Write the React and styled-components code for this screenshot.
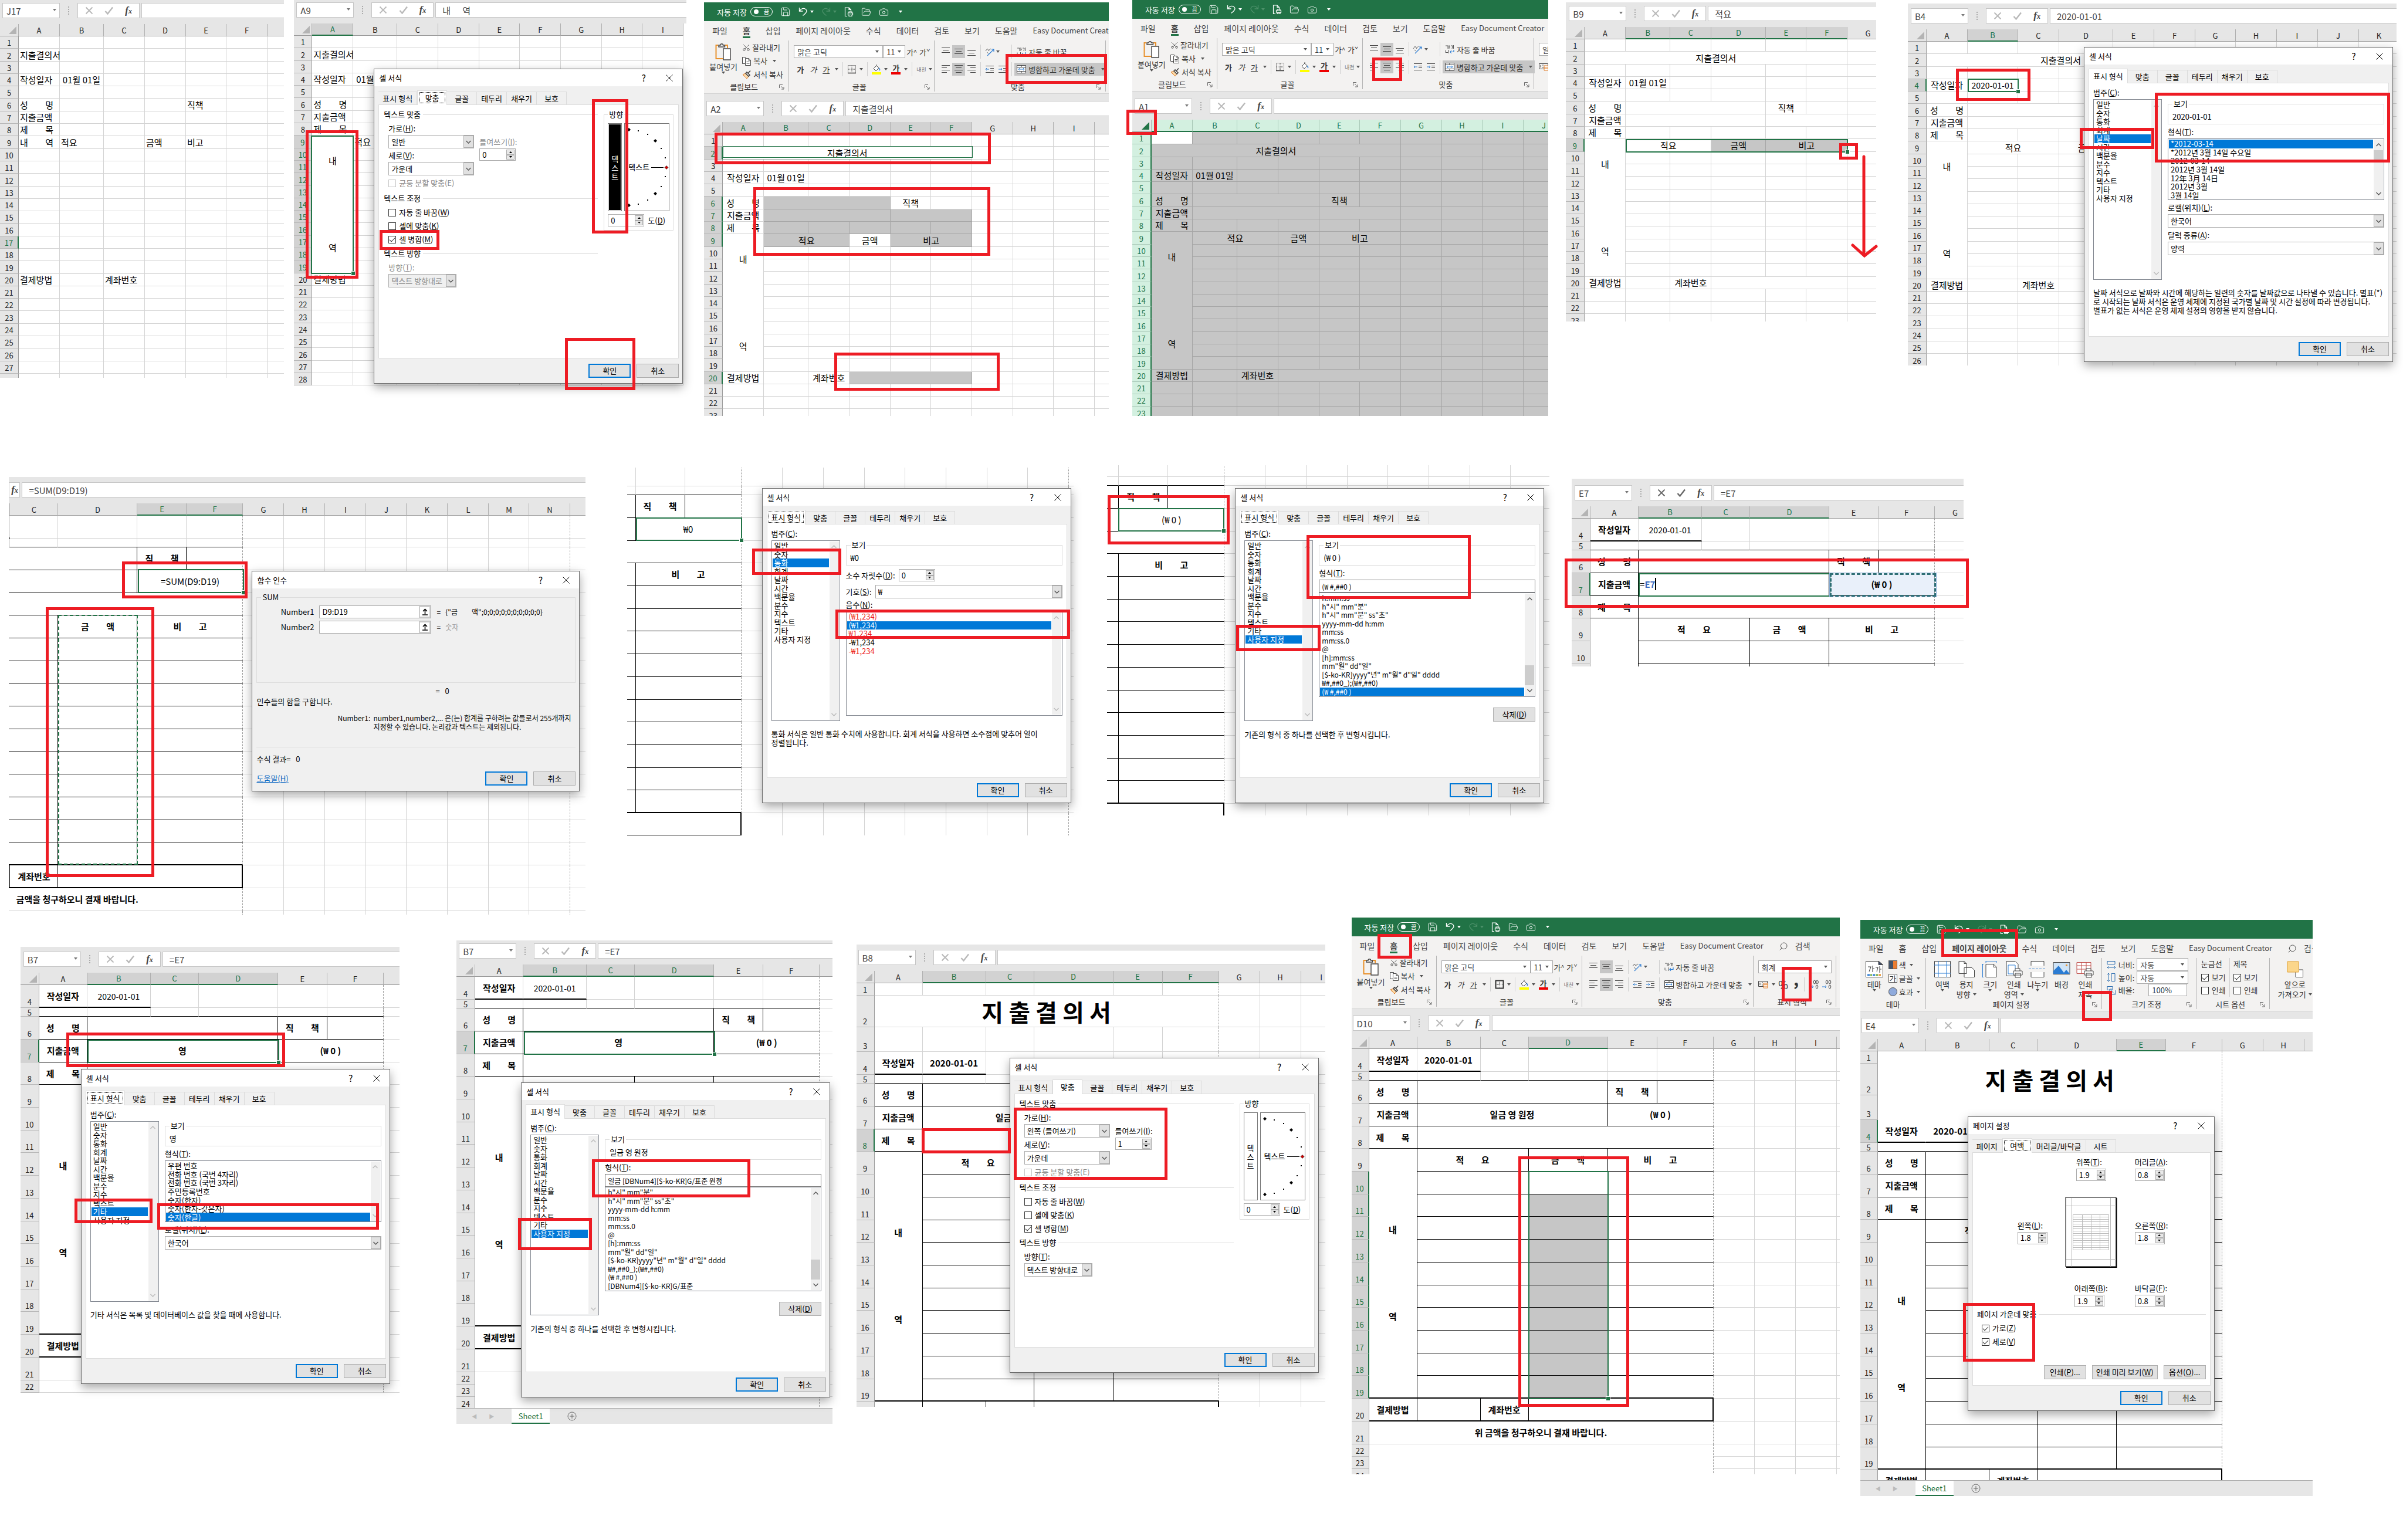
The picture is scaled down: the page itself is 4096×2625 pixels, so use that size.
import { Fragment } from "react";
import styled, { createGlobalStyle, css } from "styled-components";
import { Camera, FolderOpen, Save, Scissors, Search } from "lucide-react";

// captures are shown slightly reduced, sizes below are in capture pixels
const BOARD = 4232;
const SCALE = 4096 / BOARD;
const px = (n) => Math.round(n * SCALE);

// whole-pixel track sizes that do not drift over a long run
const tracks = (sizes) => {
  let sum = 0;
  return sizes.map((s) => {
    const from = px(sum);
    sum += s;
    return px(sum) - from;
  });
};

const GREEN = "#217346";
const RED = "#ed1c24";
const BLUE = "#0078d7";

/* ---------- ICONS ---------- */

const Svg = ({ w = 16, h = 16, children, ...rest }) => (
  <svg width={w} height={h} viewBox={`0 0 ${w} ${h}`} fill="none" stroke="#444" {...rest}>
    {children}
  </svg>
);

const UndoIcon = () => (
  <Svg stroke="#fff" strokeWidth="1.3">
    <path d="M1.5 1v6h6M1.5 7C5 2.5 9 1.5 12 3.5c3.5 2.5 2.5 6-4.5 11" />
  </Svg>
);
const RedoIcon = () => (
  <Svg stroke="#4c9069" strokeWidth="1.3">
    <path d="M14.5 1v6h-6M14.5 7C11 2.5 7 1.5 4 3.5c-3.5 2.5-2.5 6 4.5 11" />
  </Svg>
);
const PrintDocIcon = () => (
  <Svg h={17} stroke="#fff" strokeWidth="1.2">
    <path d="M5 15.5H1.5V1H8l3.5 3.5V8M8 1v3.5h3.5M6.5 13v-3h8v3.5h-8M8 10V8h5v2M8 13.5v2h5v-2" />
  </Svg>
);
const PasteIcon = () => (
  <Svg w={28} h={30} strokeWidth="1.4">
    <path d="M5 4H1.5v23H14M17 4h4v5" stroke="#e8912d" strokeWidth="2" />
    <path d="M6 7V4h3c0-3 4.5-3 4.5 0h3v3z" fill="#f3f2f1" />
    <path d="M14 10h12v19H14z" fill="#fff" />
  </Svg>
);
const CopyIcon = () => (
  <Svg>
    <path d="M5 12.5H.5v-11h6V4M5.5 3.5H11l3.5 3.5v8.5h-9zM11 3.5V7h3.5M7.5 9.5h5M7.5 12h5" fill="#fff" />
  </Svg>
);
const PainterIcon = () => (
  <Svg>
    <path d="M1 8l5-2 5 5-3 4z" fill="#fbd9a8" stroke="#e07b24" />
    <path d="M6 6l2-2 5 5-2 2zM10 6l4-4.5" strokeWidth="1.6" fill="#fff" />
  </Svg>
);
const BorderIcon = ({ solid }) => (
  <Svg stroke="#333" strokeDasharray={solid ? undefined : "1 1"}>
    <path d="M1.5 1.5h13v13h-13z" strokeWidth={solid ? 2 : 1} />
    <path d="M8 2v12M2 8h12" strokeDasharray="1 1" />
    {!solid && <path d="M1 14.5h14" strokeDasharray="none" strokeWidth="1.5" />}
  </Svg>
);
const FillIcon = () => (
  <Svg h={18}>
    <path d="M3 8l5-5 4 4-5 5zM8 3V1" fill="#fff" />
    <path d="M12 7c2 2 2 3 1 4" stroke="#2b7cd3" strokeWidth="1.5" />
    <path d="M0 16h16" stroke="#ff0" strokeWidth="4" />
  </Svg>
);
const LinesIcon = ({ rows }) => (
  <Svg>
    {rows.map(([x1, x2, y]) => (
      <path key={y} d={`M${x1} ${y}.5H${x2}`} />
    ))}
  </Svg>
);
const IndentIcon = ({ out }) => (
  <Svg h={14}>
    <path d="M1 1.5h14M9 5.5h6M9 8.5h6M1 12.5h14" />
    <path d={out ? "M7 7H1M3 5L1 7l2 2" : "M1 7h6M5 5l2 2-2 2"} stroke="#2b7cd3" />
  </Svg>
);
const AngleIcon = () => (
  <Svg w={17}>
    <path d="M1 7l3-4 3 4M6 6l4-3M3 9l3 2" strokeWidth=".8" />
    <path d="M4 15L15 4M11 4h4v4" stroke="#2b7cd3" strokeWidth="1.2" />
  </Svg>
);
const WrapIcon = () => (
  <Svg>
    <path d="M1 2h4v5M7 1v6M7 4h2M10 2h3l-1 5M14.5 1v6M1 9.5v4h4M6.5 9v6" strokeWidth=".9" />
    <path d="M15 9v3.5H9M11 10l-2 2.5 2 2.5" stroke="#2b7cd3" strokeWidth="1.2" />
  </Svg>
);
const MergeIcon = () => (
  <Svg>
    <path d="M.5 1.5h15v13H.5zM.5 4.5h15M.5 11.5h15M8 1.5v3M8 11.5v3" fill="#fff" />
    <path d="M3 8h10M5 6L3 8l2 2M11 6l2 2-2 2" stroke="#2b7cd3" />
  </Svg>
);
const MoneyIcon = () => (
  <Svg w={18} h={14}>
    <path d="M.5 1.5h15v9H.5zM3 4v4M6 4h2M6 8h2" />
    <path d="M9 5h7v8H9zM9 7.5h7M9 10h7" fill="#fff" stroke="#e07b24" />
  </Svg>
);
const DecimalIcon = ({ less }) => (
  <Svg w={17}>
    <ellipse cx={less ? 10 : 14} cy="4" rx="1.8" ry="3" />
    <ellipse cx={less ? 14.5 : 9} cy="4" rx="1.8" ry="3" />
    <ellipse cx="14" cy="12" rx="1.8" ry="3" />
    <path d="M1 12h7M6 10l2 2-2 2" stroke="#2b7cd3" />
  </Svg>
);
const LauncherIcon = () => (
  <Svg w={9} h={9} stroke="#666">
    <path d="M.5 6V.5H6M3 3l4.5 4.5M8 4v4H4" />
  </Svg>
);
const XIcon = ({ color = "#b8b8b8", width = 1.6 }) => (
  <Svg w={14} h={14} stroke={color} strokeWidth={width}>
    <path d="M1.5 1.5l11 11M12.5 1.5l-11 11" />
  </Svg>
);
const TickIcon = ({ color }) => (
  <Svg h={14} stroke={color} strokeWidth="2.4">
    <path d="M1.5 8l4 4.5L14 1.5" />
  </Svg>
);
const Chevron = ({ up, color = "#555" }) => (
  <Svg w={9} h={6} stroke={color} strokeWidth="1.4">
    <path d={up ? "M.5 5l4-4 4 4" : "M.5 1l4 4 4-4"} />
  </Svg>
);
const UpArrow = () => (
  <Svg w={11} h={12} stroke="#000" strokeWidth="1.6">
    <path d="M5.5 10V2M2 5l3.5-3.5L9 5M1 11h9" />
  </Svg>
);
const PageSizeIcon = ({ d }) => (
  <Svg>
    <path d={d} stroke="#2b6cb0" />
  </Svg>
);
const PageIcon = ({ kind }) => (
  <Svg w={30} h={30}>
    {kind === "margins" && (
      <>
        <path d="M1.5 1.5h27v27h-27z" fill="#fff" />
        <path d="M8 1v28M22 1v28M1 8h28M1 22h28" stroke="#2b7cd3" />
      </>
    )}
    {kind === "orient" && <path d="M2 1.5h9l4 4v17H2zM11 1.5v4h4M11 12.5h13l4.5 4v12H11z" fill="#fff" />}
    {kind === "size" && (
      <>
        <path d="M8 6.5h13l5 5v17H8zM21 6.5v5h5" fill="#fff" />
        <path d="M2.5 6v23M1 6.5h3M1 28.5h3M8 2.5h18M8 1v3M26 1v3" stroke="#2b7cd3" />
      </>
    )}
    {kind === "area" && (
      <>
        <path d="M2 1.5h15l5 5v20H2z" fill="#fff" />
        <path d="M5 8h12v15H5z" stroke="#2b7cd3" />
        <path d="M14 18h15v7H14zM17 18v-4h8v4M17 22h9v7h-9z" fill="#fff" />
      </>
    )}
    {kind === "breaks" && (
      <>
        <path d="M4 9V1.5h22V9M4 20v8.5h22V20" fill="#fff" />
        <path d="M0 14.5h30" stroke="#2b7cd3" strokeDasharray="4 2" />
      </>
    )}
    {kind === "back" && (
      <>
        <path d="M1 3.5h28v20H1z" fill="#cfe4f7" />
        <path d="M1 18l9-9 9 12 4-5 6 7H1z" fill="#2b7cd3" stroke="none" />
        <path d="M22 7h3v3h-3z" fill="#e8912d" stroke="none" />
      </>
    )}
    {kind === "titles" && (
      <>
        <path d="M1 3.5h24v19H1zM1 9h24M1 15h24M9 4v18M17 4v18" stroke="#c0504d" fill="#fff" />
        <path d="M14 18h15v7H14zM17 18v-4h8v4M17 22h9v7h-9z" fill="#fff" />
      </>
    )}
    {kind === "theme" && (
      <>
        <path d="M.5 1.5h22l7 6v21H.5z" fill="#fff" />
        <path d="M22 1.5v6h7z" fill="#3b4a6b" />
        <path d="M3 25h4M12 25h4" stroke="#2b7cd3" strokeWidth="3" />
        <path d="M8 25h3M17 25h4" stroke="#70ad47" strokeWidth="3" />
        <path d="M22 25h4" stroke="#e8912d" strokeWidth="3" />
        <path d="M4 11h5l-3 8M12 9v11M12 14h3M17 12h4l-2 7M24 10v11M24 15h3" strokeWidth="1.1" />
      </>
    )}
    {kind === "front" && (
      <>
        <path d="M16 20v8.5h12.5V16H22" fill="#fff" />
        <path d="M2 2h19v18H2z" fill="#fbd68b" stroke="#e0a030" />
      </>
    )}
  </Svg>
);

/* ---------- PAGE ---------- */

const GlobalStyle = createGlobalStyle`
  * { box-sizing: border-box; }
  body {
    margin: 0;
    background: #fff;
    font-family: "Noto Sans CJK KR", sans-serif;
    font-size: 13px;
    color: #000;
  }
  button, input, select { font: inherit; color: inherit; margin: 0; padding: 0; border-radius: 0; }
  svg { display: block; flex: none; }
`;

const Page = styled.main`
  min-height: 100vh;
  overflow: hidden;
`;

const StripGrid = styled.section`
  display: grid;
  grid-template-columns: ${(p) => p.$cols};
  align-items: start;
`;

const ShotFrame = styled.figure`
  position: relative;
  grid-column: ${(p) => p.$col};
  margin: ${(p) => p.$drop}px 0 0;
`;

const Screen = styled.div`
  display: flex;
  flex-direction: column;
  height: ${(p) => p.$h}px;
  overflow: hidden;
`;

const Float = styled.div`
  position: absolute;
  left: ${(p) => p.$x}px;
  top: ${(p) => p.$y}px;
`;

const Box = styled.div`
  position: absolute;
  left: ${(p) => p.$x}px;
  top: ${(p) => p.$y}px;
  width: ${(p) => p.$w}px;
  height: ${(p) => p.$h}px;
  pointer-events: none;
`;

const Mark = styled(Box)`
  border: 5px solid ${RED};
`;

const Selection = styled(Box)`
  border: ${(p) => (p.$kind === "thin" ? 1 : 2)}px ${(p) => (p.$kind === "ants" ? "dashed" : "solid")} ${GREEN};
  ${(p) =>
    p.$kind === "plain" &&
    css`
      &::after {
        content: "";
        position: absolute;
        right: -4px;
        bottom: -4px;
        width: 6px;
        height: 6px;
        background: ${GREEN};
        outline: 1px solid #fff;
      }
    `}
  ${(p) =>
    p.$kind === "ref" &&
    css`
      border: 3px dashed #2f6f75;
      outline: 1px solid #8ab0d8;
    `}
`;

const Arrow = styled.svg`
  position: absolute;
  left: ${(p) => p.$x}px;
  top: ${(p) => p.$y}px;
`;

/* ---------- RIBBON ---------- */

const TitleBar = styled.div`
  display: flex;
  align-items: center;
  flex: none;
  gap: 13px;
  height: 32px;
  padding-left: 22px;
  background: ${GREEN};
  color: #fff;
  white-space: nowrap;
`;

const AutoSave = styled.label`
  display: flex;
  align-items: center;
  gap: 6px;
`;

const Toggle = styled.button`
  display: flex;
  align-items: center;
  justify-content: space-between;
  width: 38px;
  height: 16px;
  padding: 0 5px;
  border: 1px solid #fff;
  border-radius: 8px;
  background: none;
  font-size: 10px;
  line-height: 12px;
  &::before {
    content: "";
    width: 8px;
    height: 8px;
    border-radius: 50%;
    background: #fff;
  }
`;

const Pair = styled.span`
  display: flex;
  align-items: center;
  gap: 4px;
`;

const Caret = styled.i`
  flex: none;
  width: 0;
  height: 0;
  border: 3px solid transparent;
  border-top: 4px solid ${(p) => p.$color || "#555"};
  border-bottom: 0;
  margin-left: ${(p) => p.$gap || 0}px;
`;

const Tabs = styled.nav`
  display: flex;
  flex: none;
  gap: 26px;
  height: 29px;
  padding: 6px 0 0 14px;
  background: #f3f2f1;
  font-size: 14px;
  line-height: 20px;
  white-space: nowrap;
  color: #444;
`;

const RibbonTab = styled.a`
  height: 23px;
  color: inherit;
  text-decoration: none;
  border-bottom: 3px solid ${(p) => (p.$on ? GREEN : "transparent")};
  font-size: ${(p) => (p.$latin ? 13 : 14)}px;
  font-weight: ${(p) => (p.$on ? 700 : 400)};
`;

const SearchTab = styled.span`
  display: flex;
  gap: 12px;
`;

const SearchGlass = styled(Search)`
  margin-top: 3px;
  transform: scaleX(-1);
`;

const CutIcon = styled(Scissors)`
  transform: rotate(-90deg);
`;

const RibbonBody = styled.div`
  display: flex;
  flex: none;
  height: 95px;
  padding: 4px 0 3px;
  background: #f3f2f1;
  border-bottom: 1px solid #d2d2d2;
  color: #333;
  white-space: nowrap;
`;

const GroupBox = styled.div`
  display: flex;
  flex-direction: column;
  justify-content: space-between;
  flex: none;
  width: ${(p) => p.$w}px;
  padding: 0 7px 0 8px;
  border-right: 1px solid #b5b5b5;
`;

const GroupFoot = styled.div`
  display: flex;
  align-items: center;
  line-height: 16px;
  span {
    flex: 1;
    text-align: center;
  }
`;

const Row = styled.div`
  display: flex;
  align-items: ${(p) => p.$align || "center"};
  gap: ${(p) => p.$gap || 0}px;
`;

const Stack = styled.div`
  display: flex;
  flex-direction: column;
  gap: ${(p) => p.$gap || 0}px;
`;

const ToolRows = styled.div`
  display: flex;
  flex-direction: column;
  gap: 8px;
  padding-top: 8px;
`;

const ToolRow = styled.div`
  display: flex;
  align-items: center;
  height: 22px;
`;

const SmallTool = styled.button`
  display: flex;
  align-items: center;
  gap: 3px;
  height: 23px;
  border: 0;
  background: none;
`;

const BigTool = styled.button`
  display: flex;
  flex-direction: column;
  align-items: center;
  width: ${(p) => p.$w || 41}px;
  padding: 4px 0 0;
  border: 0;
  background: none;
  line-height: 17px;
  svg { margin-bottom: 2px; }
`;

const Tool = styled.button`
  display: flex;
  align-items: center;
  justify-content: center;
  flex: none;
  width: ${(p) => p.$w || 22}px;
  height: 22px;
  border: 0;
  background: ${(p) => (p.$on ? "#c6c6c6" : "none")};
  font-weight: ${(p) => (p.$bold ? 700 : 400)};
  font-style: ${(p) => (p.$italic ? "italic" : "normal")};
  text-decoration: ${(p) => (p.$under ? "underline" : "none")};
`;

const PercentTool = styled(Tool)`
  width: 28px;
  font-size: 18px;
`;

const CommaTool = styled(Tool)`
  width: 16px;
  padding-bottom: 20px;
  font-size: 28px;
  font-weight: 700;
  line-height: 6px;
`;

const MergeTool = styled.button`
  display: flex;
  align-items: center;
  gap: 4px;
  height: 22px;
  padding: 0 4px;
  border: 0;
  background: ${(p) => (p.$on ? "#c6c6c6" : "none")};
`;

const Sep = styled.i`
  flex: none;
  width: 1px;
  height: ${(p) => p.$h || 24}px;
  margin: 0 ${(p) => p.$m || 7}px 0 ${(p) => p.$l || p.$m || 7}px;
  background: #cfcfcf;
`;

const ColorBar = styled.span`
  width: 16px;
  border-bottom: 4px solid #e00;
  font-weight: 700;
  line-height: 14px;
`;

const Mini = styled.span`
  font-size: 9px;
  color: #777;
`;

const ComboBox = styled.span`
  position: relative;
  display: flex;
  flex: none;
  width: ${(p) => p.$w}px;
  select {
    width: 100%;
    height: 22px;
    padding: 0 5px;
    border: 1px solid #ababab;
    background: #fff;
    appearance: none;
    color: #444;
  }
  i {
    position: absolute;
    right: 7px;
    top: 9px;
  }
`;

const Combo = ({ w, value, label }) => (
  <ComboBox $w={w}>
    <select aria-label={label} defaultValue={value}>
      <option>{value}</option>
    </select>
    <Caret />
  </ComboBox>
);

const Group = ({ w, title, launcher = true, children }) => (
  <GroupBox $w={w}>
    {children}
    <GroupFoot>
      <span>{title}</span>
      {launcher && <LauncherIcon />}
    </GroupFoot>
  </GroupBox>
);

const TAB_NAMES = ["파일", "홈", "삽입", "페이지 레이아웃", "수식", "데이터", "검토", "보기", "도움말", "Easy Document Creator"];

const Ribbon = ({ active, search, children }) => (
  <>
    <TitleBar>
      <AutoSave>
        자동 저장
        <Toggle type="button">끔</Toggle>
      </AutoSave>
      <Save size={18} strokeWidth={1.3} />
      <Pair><UndoIcon /><Caret $color="#fff" /></Pair>
      <Pair><RedoIcon /><Caret $color="#4c9069" /></Pair>
      <PrintDocIcon />
      <FolderOpen size={17} strokeWidth={1.3} />
      <Camera size={17} strokeWidth={1.3} />
      <Caret $color="#fff" $gap={4} />
    </TitleBar>
    <Tabs>
      {TAB_NAMES.map((t) => (
        <RibbonTab key={t} href="#" $on={t === active} $latin={t[0] === "E"}>{t}</RibbonTab>
      ))}
      {search && (
        <SearchTab>
          <SearchGlass size={16} strokeWidth={1.4} />
          검색
        </SearchTab>
      )}
    </Tabs>
    <RibbonBody>{children}</RibbonBody>
  </>
);

const AL = {
  top: [[1, 15, 1], [3, 13, 5], [1, 15, 9]],
  mid: [[1, 15, 3], [3, 13, 7], [1, 15, 11]],
  bot: [[1, 15, 6], [3, 13, 10], [1, 15, 14]],
  left: [[1, 15, 1], [1, 10, 5], [1, 15, 9], [1, 10, 13]],
  center: [[1, 15, 1], [3, 13, 5], [1, 15, 9], [3, 13, 13]],
  right: [[1, 15, 1], [6, 15, 5], [1, 15, 9], [6, 15, 13]],
};

const HomeRibbon = ({ merged, solidBorder, number, wide, search }) => (
  <Ribbon active="홈" search={search}>
    <Group w={145} title="클립보드">
      <Row $gap={7} $align="flex-start">
        <BigTool $w={50}>
          <PasteIcon />
          붙여넣기
          <Caret />
        </BigTool>
        <Stack>
          <SmallTool><CutIcon size={14} strokeWidth={1.4} />잘라내기</SmallTool>
          <SmallTool><CopyIcon />복사<Caret $gap={6} /></SmallTool>
          <SmallTool><PainterIcon />서식 복사</SmallTool>
        </Stack>
      </Row>
    </Group>
    <Group w={248} title="글꼴">
      <ToolRows>
        <ToolRow>
          <Combo w={152} value="맑은 고딕" label="글꼴" />
          <Combo w={38} value="11" label="글꼴 크기" />
          <Tool>가<sup>^</sup></Tool>
          <Tool>가<sup>ˇ</sup></Tool>
        </ToolRow>
        <ToolRow>
          <Tool $bold>가</Tool>
          <Tool $italic>가</Tool>
          <Tool $under>가</Tool>
          <Caret $gap={4} />
          <Sep />
          <BorderIcon solid={solidBorder} />
          <Caret $gap={5} />
          <Sep />
          <FillIcon />
          <Caret $gap={5} />
          <Tool $w={28}><ColorBar>가</ColorBar></Tool>
          <Caret />
          <Sep />
          <Mini>내천</Mini>
          <Caret $gap={4} />
        </ToolRow>
      </ToolRows>
    </Group>
    <Group w={292} title="맞춤">
      <ToolRows>
        <ToolRow>
          <Tool><LinesIcon rows={AL.top} /></Tool>
          <Tool $on><LinesIcon rows={AL.mid} /></Tool>
          <Tool><LinesIcon rows={AL.bot} /></Tool>
          <Sep $m={4} />
          <Tool><AngleIcon /></Tool>
          <Caret />
          <Sep $l={20} $m={4} />
          <MergeTool><WrapIcon />자동 줄 바꿈</MergeTool>
        </ToolRow>
        <ToolRow>
          <Tool><LinesIcon rows={AL.left} /></Tool>
          <Tool $on><LinesIcon rows={AL.center} /></Tool>
          <Tool><LinesIcon rows={AL.right} /></Tool>
          <Sep $m={4} />
          <Tool><IndentIcon out /></Tool>
          <Tool><IndentIcon /></Tool>
          <Sep $m={4} />
          <MergeTool $on={merged}><MergeIcon />병합하고 가운데 맞춤<Caret $gap={6} /></MergeTool>
        </ToolRow>
      </ToolRows>
    </Group>
    {number && (
      <Group w={141} title={wide ? "표시 형식" : ""} launcher={wide}>
        <ToolRows>
          <ToolRow><Combo w={125} value={number} label="표시 형식" /></ToolRow>
          <ToolRow>
            <MoneyIcon />
            <Caret $gap={5} />
            {wide && (
              <>
                <PercentTool>%</PercentTool>
                <CommaTool>,</CommaTool>
                <Sep $m={5} />
                <Tool><DecimalIcon less /></Tool>
                <Tool><DecimalIcon /></Tool>
              </>
            )}
          </ToolRow>
        </ToolRows>
      </Group>
    )}
  </Ribbon>
);

const Check = styled.input.attrs({ type: "checkbox" })`
  position: relative;
  flex: none;
  width: 13px;
  height: 13px;
  border: 1px solid ${(p) => (p.disabled ? "#c4c4c4" : "#333")};
  background: #fff;
  appearance: none;
  &:checked::after {
    content: "";
    position: absolute;
    left: 3px;
    top: 0;
    width: 4px;
    height: 8px;
    border: solid #333;
    border-width: 0 1px 1px 0;
    transform: rotate(45deg);
  }
`;

const CheckLabel = styled.label`
  display: flex;
  align-items: center;
  gap: 5px;
  line-height: 16px;
  color: ${(p) => (p.$off ? "#8a8a8a" : "inherit")};
`;

const Swatch = styled.i`
  width: 15px;
  height: 15px;
  border: 1px solid #555;
  border-radius: ${(p) => (p.$round ? "50%" : 0)};
  background: ${(p) => p.$bg};
  font-style: normal;
  line-height: 13px;
`;

const ScaleLine = styled.label`
  display: flex;
  align-items: center;
  gap: 4px;
  input {
    width: 66px;
    height: 21px;
    margin-left: 20px;
    padding-left: 5px;
    border: 1px solid #ababab;
    background: #fff;
  }
`;

const PAGE_TOOLS = [
  ["margins", "여백", ""],
  ["orient", "용지", "방향"],
  ["size", "크기", ""],
  ["area", "인쇄", "영역"],
  ["breaks", "나누기", ""],
  ["back", "배경", null],
  ["titles", "인쇄", "제목"],
];

const LayoutRibbon = () => (
  <Ribbon active="페이지 레이아웃" search>
    <Group w={112} title="테마" launcher={false}>
      <Row $gap={8} $align="flex-start">
        <BigTool $w={32}><PageIcon kind="theme" />테마<Caret /></BigTool>
        <Stack>
          <SmallTool><Swatch $bg="linear-gradient(90deg, #44546a 50%, #ed7d31 50%)" />색<Caret $gap={3} /></SmallTool>
          <SmallTool><Swatch $bg="#fff">가</Swatch>글꼴<Caret $gap={3} /></SmallTool>
          <SmallTool><Swatch $round $bg="#8faadc" />효과<Caret $gap={3} /></SmallTool>
        </Stack>
      </Row>
    </Group>
    <Group w={300} title="페이지 설정">
      <Row $align="flex-start">
        {PAGE_TOOLS.map(([kind, a, b]) => (
          <BigTool key={kind} $w={41}>
            <PageIcon kind={kind} />
            {a}
            {b !== null && <Pair>{b}{kind !== "titles" && <Caret />}</Pair>}
          </BigTool>
        ))}
      </Row>
    </Group>
    <Group w={161} title="크기 조정">
      <Stack>
        <Row $gap={4}><PageSizeIcon d="M1 2.5h13v5H1zM1 13h14M3 11l-2 2 2 2M13 11l2 2-2 2" />너비:<Combo w={88} value="자동" label="너비" /></Row>
        <Row $gap={4}><PageSizeIcon d="M8 1.5h6v13H8zM3 1v14M1 3l2-2 2 2M1 13l2 2 2-2" />높이:<Combo w={88} value="자동" label="높이" /></Row>
        <ScaleLine><PageSizeIcon d="M1 1.5h9v6H1zM15 15V8M15 15H8M13 14L5 6M5 10V6h4" />배율:<input defaultValue="100%" /></ScaleLine>
      </Stack>
    </Group>
    <Group w={125} title="시트 옵션">
      <Row $gap={4} $align="flex-start">
        {["눈금선", "제목"].map((t, i) => (
          <Fragment key={t}>
            {i > 0 && <Sep $h={66} $m={2} />}
            <Stack $gap={6}>
              <span>{t}</span>
              <CheckLabel><Check defaultChecked />보기</CheckLabel>
              <CheckLabel><Check />인쇄</CheckLabel>
            </Stack>
          </Fragment>
        ))}
      </Row>
    </Group>
    <Group w={90} title="" launcher={false}>
      <BigTool $w={70}><PageIcon kind="front" />앞으로<Pair>가져오기<Caret /></Pair></BigTool>
    </Group>
  </Ribbon>
);

/* ---------- FORMULA BAR ---------- */

const Bar = styled.div`
  display: flex;
  align-items: stretch;
  flex: none;
  height: ${(p) => p.$top + 36}px;
  padding: ${(p) => p.$top}px 0 10px ${(p) => p.$inset}px;
  background: #e6e6e6;
  color: #444;
  font-size: 15px;
`;

const NameBox = styled.span`
  position: relative;
  flex: none;
  width: 98px;
  input {
    width: 100%;
    height: 100%;
    padding-left: 6px;
    border: 1px solid #c6c6c6;
    background: #fff;
  }
  i {
    position: absolute;
    right: 6px;
    top: 10px;
  }
`;

const Dots = styled.i`
  flex: none;
  width: 2px;
  margin: 6px 14px;
  border-left: 2px dotted #aaa;
`;

const FxBox = styled.span`
  display: flex;
  align-items: center;
  justify-content: ${(p) => (p.$short ? "center" : "space-between")};
  flex: none;
  width: ${(p) => (p.$short ? 19 : 106)}px;
  margin-right: 3px;
  padding: 0 ${(p) => (p.$short ? 0 : 12)}px;
  border: 1px solid #c6c6c6;
  background: #fff;
  overflow: hidden;
  em {
    font-family: "Liberation Serif", serif;
    font-size: 17px;
    font-weight: 700;
  }
  sub { font-size: 12px; vertical-align: baseline; }
`;

const FormulaInput = styled.input`
  flex: 1;
  min-width: 0;
  && { padding-left: 11px; }
  border: 1px solid #c6c6c6;
  border-right: 0;
  background: #fff;
`;

const FormulaBar = ({ cell, value = "", top = 5, inset = 4, live }) => (
  <Bar $top={top} $inset={inset}>
    {cell && (
      <>
        <NameBox>
          <input aria-label="이름 상자" defaultValue={cell} />
          <Caret $color="#777" />
        </NameBox>
        <Dots />
      </>
    )}
    <FxBox $short={!cell}>
      {cell && <XIcon color={live ? "#666" : "#b8b8b8"} width={1.8} />}
      {cell && <TickIcon color={live ? "#666" : "#b8b8b8"} />}
      <em>f<sub>x</sub></em>
    </FxBox>
    <FormulaInput aria-label="수식 입력줄" defaultValue={value} />
  </Bar>
);

/* ---------- SHEET ---------- */

const LINES = {
  g: "1px solid #d4d4d4",
  m: "1px solid #a6a6a6",
  k: "1px solid #000",
  K: "2px solid #000",
  d: "1px dashed #999",
  n: "1px solid transparent",
};

const Table = styled.table`
  flex: none;
  width: ${(p) => p.$w}px;
  margin: ${(p) => p.$dy}px 0 0 ${(p) => p.$dx}px;
  table-layout: fixed;
  border-collapse: separate;
  border-spacing: 0;
  background: #fff;
`;

const Col = styled.col`
  width: ${(p) => p.$w}px;
`;

const Head = styled.th`
  height: ${(p) => p.$h}px;
  padding: 0;
  border: 0 solid #9b9b9b;
  border-right-width: 1px;
  border-bottom-width: 1px;
  border-color: ${(p) => (p.$mint ? "#a9c9b8" : p.$row ? "#9b9b9b #9b9b9b #b8b8b8" : "#b0b0b0 #b0b0b0 #9b9b9b")};
  background: ${(p) => (p.$mint ? "#d3f0e0" : p.$on ? "#d2d2d2" : "#e6e6e6")};
  color: ${(p) => (p.$on || p.$mint ? GREEN : "#222")};
  font-size: 13px;
  font-weight: 400;
  line-height: 13px;
  vertical-align: ${(p) => (p.$row ? "bottom" : "middle")};
  ${(p) => p.$row && p.$h > 18 && "padding-bottom: 3px;"}
  ${(p) => (p.$on || p.$mint) && (p.$row ? `border-right: 2px solid ${GREEN};` : `border-bottom: 2px solid ${GREEN};`)}
`;

const Corner = styled.td`
  padding: 0 3px 3px 0;
  border-right: 1px solid #b0b0b0;
  border-bottom: 1px solid #9b9b9b;
  background: #e6e6e6;
  vertical-align: bottom;
  &::after {
    content: "";
    display: block;
    width: 0;
    margin-left: auto;
    border-left: 13px solid transparent;
    border-bottom: 13px solid ${(p) => (p.$on ? GREEN : "#b4b4b4")};
  }
`;

const Cell = styled.td`
  padding: 0 ${(p) => (p.$align === "left" ? 2 : 0)}px;
  border-right: ${(p) => p.$r};
  border-bottom: ${(p) => p.$b};
  background: ${(p) => p.$fill || "transparent"};
  font-size: ${(p) => p.$size || 15}px;
  font-weight: ${(p) => (p.$bold ? 700 : 400)};
  line-height: ${(p) => (p.$size > 20 ? 44 : 18)}px;
  text-align: ${(p) => p.$align};
  white-space: nowrap;
`;

// two syllables set to the ends of a four-syllable label
const Spread = styled.span`
  display: inline-block;
  width: 57px;
  text-align-last: justify;
`;

const Tall = styled.span`
  display: flex;
  flex-direction: column;
  align-items: center;
  gap: 130px;
`;

const Ref = styled.b`
  color: #3c6cc0;
  border-right: 2px solid #000;
`;

const NAMES = "ABCDEFGHIJKLMNOP";

const Sheet = ({
  cols,
  rows,
  cells = {},
  heads = true,
  rowHead = 33,
  on = {},
  dx = 0,
  dy = 0,
  align = "center",
  line = "g",
  breaks = "",
  mute = [],
  all,
  from = "A",
}) => {
  const colW = tracks(cols);
  const rowH = tracks(rows.map((r) => r[1]));
  const head = heads === true ? px(rowHead) : 0;
  const covered = new Set();
  const base = all ? "m" : line;
  return (
    <Table $w={colW.reduce((a, b) => a + b, head)} $dx={px(dx)} $dy={px(dy)}>
      <colgroup>
        {head > 0 && <Col $w={head} />}
        {colW.map((w, i) => <Col key={i} $w={w} />)}
      </colgroup>
      {heads && (
        <thead>
          <tr>
            {head > 0 && <Corner $on={all} />}
            {cols.map((_, i) => (
              <Head key={i} scope="col" $h={21} $mint={all} $on={on.cols?.includes(NAMES[i])}>
                {NAMES[i] >= from && !mute.includes(NAMES[i]) ? NAMES[i] : ""}
              </Head>
            ))}
          </tr>
        </thead>
      )}
      <tbody>
        {rows.map(([n], ri) => (
          <tr key={n} style={{ height: rowH[ri] }}>
            {head > 0 && (
              <Head scope="row" $row $h={rowH[ri]} $mint={all} $on={on.rows?.includes(n)}>
                {mute.includes(n) ? "" : n}
              </Head>
            )}
            {cols.map((_, ci) => {
              const key = NAMES[ci] + n;
              if (covered.has(key)) return null;
              const c = cells[key] || {};
              const cs = c.cs || 1;
              const rs = Math.min(c.rs || 1, rows.length - ri);
              for (let a = 0; a < cs; a++) {
                for (let b = 0; b < rs; b++) covered.add(NAMES[ci + a] + (n + b));
              }
              const last = NAMES[ci + cs - 1];
              return (
                <Cell
                  key={key}
                  colSpan={cs}
                  rowSpan={rs}
                  $r={LINES[c.r || (breaks.includes(last) ? "d" : base)]}
                  $b={LINES[c.b || base]}
                  $fill={c.fill || (all && key !== "A1" ? "#c6c6c6" : undefined)}
                  $bold={c.bold}
                  $size={c.size}
                  $align={c.align || align}
                >
                  {c.t}
                </Cell>
              );
            })}
          </tr>
        ))}
      </tbody>
    </Table>
  );
};

const span = (from, to) => Array.from({ length: to - from + 1 }, (_, i) => from + i);
const plainRows = (to) => span(1, to).map((n) => [n, 22]);
const sp = (t) => <Spread>{t}</Spread>;
const naeyeok = <Tall><span>내</span><span>역</span></Tall>;

// leaves the cell but not its text, for cells that a dialog covers
const without = (cells, keys) => {
  const out = { ...cells };
  keys.split(" ").forEach((k) => {
    out[k] = { ...out[k], t: undefined };
  });
  return out;
};

const listCells = {
  A2: { t: "지출결의서" },
  A4: { t: "작성일자" },
  B4: { t: "01월 01일", align: "center" },
  A6: { t: sp("성 명") },
  E6: { t: "직책" },
  A7: { t: "지출금액" },
  A8: { t: sp("제 목") },
  A9: { t: sp("내 역") },
  B9: { t: "적요" },
  D9: { t: "금액" },
  E9: { t: "비고" },
  A20: { t: "결제방법" },
  C20: { t: "계좌번호" },
};

const mergedCells = {
  ...listCells,
  A2: { t: "지출결의서", cs: 6 },
  B6: { cs: 3 },
  B7: { cs: 3 },
  E7: { cs: 2 },
  A9: { t: naeyeok, rs: 11 },
  B9: { t: "적요", cs: 2 },
  E9: { t: "비고", cs: 2 },
  D20: { cs: 3 },
};

const GRAY = "#c6c6c6";
const filledCells = {
  ...mergedCells,
  A2: { t: "지출결의서", cs: 6, b: "m" },
  B6: { cs: 3, fill: GRAY, r: "m", b: "m" },
  B7: { cs: 3, fill: GRAY, r: "m", b: "m" },
  E7: { cs: 2, fill: GRAY, r: "m", b: "m" },
  ...Object.fromEntries([..."BCDEF"].map((l) => [l + 8, { fill: GRAY, r: "m", b: "m" }])),
  B9: { t: "적요", cs: 2, fill: GRAY, r: "m", b: "m" },
  E9: { t: "비고", cs: 2, fill: GRAY, r: "m", b: "m" },
  D20: { cs: 3, fill: GRAY, r: "m", b: "m" },
};

const FORM_COLS = [85, 111, 85, 140, 86, 100];
const formCols = (extra) => [...FORM_COLS, ...Array(extra).fill(72)];
const FORM_H = { 1: 22, 2: 55, 3: 44, 4: 40, 5: 16 };
const formRows = (from, to) => span(from, to).map((n) => [n, FORM_H[n] || (n > 21 ? 22 : 40)]);

const formCells = ({ date, boldDate, amount, won, wonBold = true, from = "A", fillD }) => {
  const c = {
    A2: { t: "지 출 결 의 서", cs: 6, bold: true, size: 40 },
    A4: { t: "작성일자", bold: true, b: "K" },
    B4: { t: date, b: "K", bold: boldDate, size: boldDate ? 15 : 14 },
    A6: { t: sp("성 명"), bold: true, r: "k", b: "k" },
    B6: { cs: 3, r: "k", b: "k" },
    E6: { t: sp("직 책"), bold: true, r: "k", b: "k" },
    F6: { b: "k" },
    A7: { t: "지출금액", bold: true, r: "k", b: "k" },
    B7: { ...amount, cs: 3, r: "k", b: "k" },
    E7: { t: won, bold: wonBold, cs: 2, b: "k" },
    A8: { t: sp("제 목"), bold: true, r: "k", b: "k" },
    B8: { cs: 5, b: "k" },
    A9: { t: naeyeok, bold: true, rs: 11, r: "k", b: "K" },
    B9: { t: sp("적 요"), bold: true, cs: 2, r: "k", b: "k" },
    D9: { t: sp("금 액"), bold: true, r: "k", b: "k" },
    E9: { t: sp("비 고"), bold: true, cs: 2, b: "k" },
    A20: { t: "결제방법", bold: true, r: "k", b: "K" },
    B20: { r: "k", b: "K" },
    C20: { t: "계좌번호", bold: true, r: "k", b: "K" },
    D20: { cs: 3, r: "K", b: "K" },
    A21: { t: "위 금액을 청구하오니 결재 바랍니다.", bold: true, cs: 6 },
    A22: { cs: 6, rs: 3 },
  };
  [..."ABCDEF"].forEach((l) => {
    c[l + 5] = { b: "k" };
  });
  span(10, 19).forEach((n) => {
    const b = n === 19 ? "K" : "k";
    c["B" + n] = { cs: 2, r: "k", b };
    c["D" + n] = { r: "k", b, fill: fillD && n > 10 ? GRAY : undefined };
    c["E" + n] = { cs: 2, b };
  });
  // labels that lie left of the visible part
  Object.keys(c).forEach((k) => {
    if (k[0] < from) delete c[k].t;
  });
  return c;
};

const SheetTabs = styled.div`
  display: flex;
  align-items: center;
  flex: none;
  gap: 20px;
  height: 27px;
  padding-left: 26px;
  border-top: 1px solid #ababab;
  background: #e6e6e6;
  color: #bbb;
  font-size: 9px;
`;

const SheetTab = styled.button`
  align-self: stretch;
  width: 65px;
  margin: 0 10px;
  border: 0;
  border-bottom: 2px solid ${GREEN};
  background: #fff;
  color: ${GREEN};
  font-size: 13px;
`;

// keeps the sheet tabs at the bottom over a sheet that is longer than the view
const BottomTabs = styled.div`
  position: absolute;
  left: 0;
  right: 0;
  bottom: 0;
`;

const TabBar = () => (
  <SheetTabs>
    <span>◀</span>
    <span>▶</span>
    <SheetTab>Sheet1</SheetTab>
    <Svg stroke="#666">
      <circle cx="8" cy="8" r="7" />
      <path d="M8 4v8M4 8h8" />
    </Svg>
  </SheetTabs>
);

/* ---------- DIALOGS ---------- */

const Window = styled.section`
  width: ${(p) => p.$w}px;
  border: 1px solid #6b6b6b;
  background: #f0f0f0;
  box-shadow: 0 6px 16px rgba(0, 0, 0, 0.35);
  line-height: 16px;
  white-space: nowrap;
`;

const WindowTitle = styled.header`
  display: flex;
  align-items: center;
  height: 29px;
  padding-left: 8px;
  background: #fff;
  h2 {
    flex: 1;
    margin: 0;
    font-size: 13px;
    font-weight: 400;
  }
`;

const TitleButton = styled.button`
  display: flex;
  align-items: center;
  justify-content: center;
  width: 44px;
  height: 29px;
  border: 0;
  background: none;
  font-size: 15px;
`;

const WindowBody = styled.div`
  padding: 7px 6px 9px 7px;
`;

const DialogTabs = styled.div`
  display: flex;
  align-items: flex-end;
  height: 24px;
`;

const DialogTab = styled.button`
  position: relative;
  min-width: 51px;
  height: ${(p) => (p.$on ? 25 : 22)}px;
  margin-bottom: ${(p) => (p.$on ? -1 : 0)}px;
  padding: 0 7px;
  border: 1px solid #dcdcdc;
  border-left-width: ${(p) => (p.$on ? 1 : 0)}px;
  border-bottom: 0;
  background: ${(p) => (p.$on ? "#fff" : "#f0f0f0")};
  line-height: 18px;
  ${(p) => p.$focus && "outline: 1px dotted #000; outline-offset: -4px;"}
`;

const Pane = styled.div`
  height: ${(p) => p.$h}px;
  padding: 8px 7px;
  border: 1px solid #dcdcdc;
  background: #fff;
`;

const Footer = styled.footer`
  display: flex;
  justify-content: flex-end;
  gap: 10px;
  padding-top: 9px;
`;

const PushButton = styled.button`
  width: ${(p) => p.$w || 72}px;
  height: 24px;
  border: ${(p) => (p.$main ? `2px solid ${BLUE}` : "1px solid #adadad")};
  background: #e1e1e1;
`;

const Dialog = ({ title, w = 527, children, footer }) => (
  <Window $w={w}>
    <WindowTitle>
      <h2>{title}</h2>
      <TitleButton>?</TitleButton>
      <TitleButton aria-label="닫기"><XIcon color="#000" width={1} /></TitleButton>
    </WindowTitle>
    <WindowBody>
      {children}
      <Footer>
        {footer}
        <PushButton $main>확인</PushButton>
        <PushButton>취소</PushButton>
      </Footer>
    </WindowBody>
  </Window>
);

const TabRow = ({ names, active, focus }) => (
  <DialogTabs role="tablist">
    {names.map((n) => (
      <DialogTab key={n} role="tab" $on={n === active} $focus={focus && n === active}>{n}</DialogTab>
    ))}
  </DialogTabs>
);

const CELL_TABS = ["표시 형식", "맞춤", "글꼴", "테두리", "채우기", "보호"];

const Key = ({ k }) => (
  <>
    (<u>{k}</u>)
  </>
);

const PickerBox = styled.span`
  position: relative;
  display: flex;
  flex: ${(p) => (p.$grow ? "1" : "none")};
  width: ${(p) => (p.$w ? `${p.$w}px` : "auto")};
  height: 23px;
  border: 1px solid #ababab;
  background: ${(p) => (p.$off ? "#f0f0f0" : "#fff")};
  color: ${(p) => (p.$off ? "#8a8a8a" : "inherit")};
  select {
    flex: 1;
    min-width: 0;
    padding: 0 4px;
    border: 0;
    background: none;
    appearance: none;
    opacity: 1;
  }
  > span {
    display: flex;
    align-items: center;
    justify-content: center;
    width: 17px;
    border: 1px solid #ababab;
    background: #e1e1e1;
    pointer-events: none;
  }
`;

const Picker = ({ w, grow, value, off }) => (
  <PickerBox $w={w} $grow={grow} $off={off}>
    <select defaultValue={value} disabled={off}>
      <option>{value}</option>
    </select>
    <span><Chevron /></span>
  </PickerBox>
);

const SpinBox = styled.span`
  display: flex;
  flex: none;
  width: ${(p) => p.$w}px;
  height: 21px;
  border: 1px solid #ababab;
  background: #fff;
  input {
    flex: 1;
    min-width: 0;
    padding-left: 4px;
    border: 0;
    background: none;
  }
  span {
    display: flex;
    flex-direction: column;
    width: 16px;
    padding: 1px;
  }
  button {
    display: flex;
    align-items: center;
    justify-content: center;
    flex: 1;
    border: 1px solid #ababab;
    background: #e8e8e8;
  }
`;

const Spin = ({ w = 62, value }) => (
  <SpinBox $w={w}>
    <input defaultValue={value} />
    <span>
      <button aria-label="늘리기"><Svg w={5} h={3}><path d="M0 3h5L2.5 0z" fill="#000" stroke="none" /></Svg></button>
      <button aria-label="줄이기"><Svg w={5} h={3}><path d="M0 0h5L2.5 3z" fill="#000" stroke="none" /></Svg></button>
    </span>
  </SpinBox>
);

const ListFrame = styled.div`
  display: flex;
  height: ${(p) => p.$h}px;
  ${(p) => p.$w && `width: ${p.$w}px; flex: none;`}
  border: 1px solid #828790;
  background: #fff;
  font-size: ${(p) => (p.$code ? 12 : 13)}px;
`;

// the rows share the height of the list
const Options = styled.ul`
  display: grid;
  grid-template-rows: repeat(${(p) => p.$n}, 1fr);
  flex: 1;
  min-width: 0;
  height: ${(p) => p.$h}px;
  margin: 1px 0 0 1px;
  padding: 0;
  list-style: none;
`;

const Option = styled.li`
  display: flex;
  align-items: center;
  min-height: 0;
  padding-left: 3px;
  line-height: 14px;
  white-space: pre;
  background: ${(p) => (p.$on ? BLUE : "transparent")};
  color: ${(p) => (p.$on ? "#fff" : p.$red ? RED : "#000")};
`;

const Scroll = styled.div`
  display: flex;
  flex-direction: column;
  align-items: center;
  justify-content: space-between;
  width: 16px;
  padding: 6px 0;
  margin: 1px;
  background: #f0f0f0;
  i {
    width: 16px;
    height: ${(p) => p.$thumb}px;
    background: #cdcdcd;
    margin-top: ${(p) => (p.$low ? "auto" : "6px")};
    margin-bottom: ${(p) => (p.$low ? "6px" : "auto")};
  }
`;

const ListBox = ({ items, active, h, w, thumb, low, code, red = [] }) => {
  const n = items.length;
  return (
    <ListFrame $h={h} $w={w} $code={code}>
      <Options role="listbox" $n={n} $h={Math.round((n * 29) / 2)}>
        {items.map((t, i) => (
          <Option key={i} role="option" aria-selected={i === active} $on={i === active} $red={red.includes(i)}>{t}</Option>
        ))}
      </Options>
      <Scroll $thumb={thumb} $low={low}>
        <Chevron up color={thumb ? "#555" : "#bbb"} />
        {thumb && <i />}
        <Chevron color={thumb ? "#555" : "#bbb"} />
      </Scroll>
    </ListFrame>
  );
};

const Frame = styled.fieldset`
  min-width: 0;
  margin: 0;
  padding: ${(p) => p.$pad || "6px 7px 4px"};
  border: 1px solid #dcdcdc;
  legend {
    padding: 0 2px;
  }
`;

const FieldBlock = styled.label`
  display: flex;
  flex-direction: column;
  gap: 3px;
  margin-top: ${(p) => p.$mt || 0}px;
  color: ${(p) => (p.$off ? "#8a8a8a" : "inherit")};
  input { color: #000; }
`;

const FieldLine = styled.label`
  display: flex;
  align-items: center;
  gap: 6px;
  margin-top: ${(p) => p.$mt || 0}px;
`;

const Side = styled.div`
  display: flex;
  flex-direction: column;
  flex: 1;
  min-width: 0;
`;

const TextInput = styled.input`
  width: 100%;
  height: 22px;
  && {
    padding: 0 4px;
    font-size: 12px;
  }
  border: 1px solid #7a7a7a;
`;

const Note = styled.p`
  margin: 14px 0 0;
  line-height: 15px;
  white-space: pre-line;
`;

const DeleteButton = styled(PushButton)`
  align-self: flex-end;
  margin-top: 18px;
`;

const Under = styled.div`
  margin-top: ${(p) => p.$mt}px;
`;

const KINDS = ["일반", "숫자", "통화", "회계", "날짜", "시간", "백분율", "분수", "지수", "텍스트", "기타", "사용자 지정"];

const FormatDialog = ({ kind, focus, sample, note, children }) => (
  <Dialog title="셀 서식">
    <TabRow names={CELL_TABS} active="표시 형식" focus={focus} />
    <Pane $h={433}>
      <div>범주<Key k="C" />:</div>
      <Under $mt={3}>
        <Row $gap={10} $align="flex-start">
          <ListBox items={KINDS} active={KINDS.indexOf(kind)} h={308} w={117} />
          <Side>
            <Frame>
              <legend>보기</legend>
              {sample}
            </Frame>
            {children}
          </Side>
        </Row>
      </Under>
      <Note>{note}</Note>
    </Pane>
  </Dialog>
);

const CustomFormat = ({ value, items, active }) => (
  <>
    <FieldBlock $mt={5}>
      <span>형식<Key k="T" />:</span>
      <TextInput defaultValue={value} />
    </FieldBlock>
    <ListBox items={items} active={active} h={178} thumb={34} low code />
    <DeleteButton>삭제<Key k="D" /></DeleteButton>
  </>
);

const CODES = [
  'h"시" mm"분"',
  'h"시" mm"분" ss"초"',
  "yyyy-mm-dd h:mm",
  "mm:ss",
  "mm:ss.0",
  "@",
  "[h]:mm:ss",
  'mm"월" dd"일"',
  '[$-ko-KR]yyyy"년" m"월" d"일" dddd',
  "₩#,##0_);(₩#,##0)",
  "(₩ #,##0 )",
];

const SectionTitle = styled.div`
  display: flex;
  align-items: center;
  gap: 4px;
  margin-top: ${(p) => p.$mt || 0}px;
  &::after {
    content: "";
    flex: 1;
    border-top: 1px solid #dcdcdc;
  }
`;

const AlignSide = styled.div`
  width: 365px;
  margin-left: 1px;
`;

const Indent = styled.div`
  display: flex;
  flex-direction: column;
  align-items: flex-start;
  gap: ${(p) => p.$gap || 7}px;
  padding: 8px 0 0 8px;
`;

const VerticalText = styled.div`
  display: flex;
  flex-direction: column;
  align-items: center;
  justify-content: center;
  width: 24px;
  height: 150px;
  border: 1px solid #777;
  background: ${(p) => (p.$dark ? "#000" : "#fff")};
  color: ${(p) => (p.$dark ? "#fff" : "#000")};
  box-shadow: inset 0 0 0 1px #fff;
  line-height: 15px;
`;

const DialBox = styled.div`
  display: flex;
  align-items: center;
  position: relative;
  width: 77px;
  height: 150px;
  padding-left: 6px;
  border: 1px solid #777;
  svg {
    position: absolute;
    left: 0;
    top: 0;
  }
`;

const Dial = () => (
  <DialBox>
    텍스트
    <Svg w={75} h={148} stroke="none" fill="#000">
      {[[7, 10], [52, 29], [52, 119], [7, 139]].map(([x, y]) => (
        <path key={`${x}-${y}`} d={`M${x - 3} ${y}l3-3 3 3-3 3z`} />
      ))}
      {[[23, 12], [39, 18], [62, 42], [69, 58], [69, 90], [62, 107], [39, 130], [23, 137]].map(([x, y]) => (
        <rect key={`${x}-${y}`} x={x - 1} y={y - 1} width="2" height="2" />
      ))}
      <path d="M45 74h21v1H45z" />
      <path d="M68 74.5l3-3 3 3-3 3z" fill="#c00" stroke="#000" strokeWidth=".5" />
    </Svg>
  </DialBox>
);

const AlignDialog = ({ focus, horizontal, indent, dark, off }) => (
  <Dialog title="셀 서식">
    <TabRow names={CELL_TABS} active="맞춤" focus={focus} />
    <Pane $h={433}>
      <Row $gap={10} $align="flex-start">
        <AlignSide>
          <SectionTitle>텍스트 맞춤</SectionTitle>
          <Indent $gap={5}>
            <Row $gap={9} $align="flex-start">
              <Stack $gap={4}>
                <FieldBlock><span>가로<Key k="H" />:</span><Picker w={146} value={horizontal} /></FieldBlock>
                <FieldBlock><span>세로<Key k="V" />:</span><Picker w={146} value="가운데" /></FieldBlock>
              </Stack>
              <FieldBlock $mt={23} $off={off}><span>들여쓰기<Key k="I" />:</span><Spin value={indent} /></FieldBlock>
            </Row>
            <CheckLabel $off><Check disabled />균등 분할 맞춤(E)</CheckLabel>
          </Indent>
          <SectionTitle $mt={10}>텍스트 조정</SectionTitle>
          <Indent>
            <CheckLabel><Check /><span>자동 줄 바꿈<Key k="W" /></span></CheckLabel>
            <CheckLabel><Check /><span>셀에 맞춤<Key k="K" /></span></CheckLabel>
            <CheckLabel><Check defaultChecked /><span>셀 병합<Key k="M" /></span></CheckLabel>
          </Indent>
          <SectionTitle $mt={8}>텍스트 방향</SectionTitle>
          <Indent>
            <FieldBlock $off={off}><span>방향<Key k="T" />:</span><Picker w={116} value="텍스트 방향대로" off={off} /></FieldBlock>
          </Indent>
        </AlignSide>
        <Frame $pad="7px 6px 6px">
          <legend>방향</legend>
          <Row $gap={4}>
            <VerticalText $dark={dark}><span>텍</span><span>스</span><span>트</span></VerticalText>
            <Dial />
          </Row>
          <FieldLine $mt={5}><Spin value="0" /><span>도<Key k="D" /></span></FieldLine>
        </Frame>
      </Row>
    </Pane>
  </Dialog>
);

const SumGrid = styled.div`
  display: grid;
  grid-template-columns: 90px 191px auto;
  align-items: center;
  align-content: start;
  gap: 4px 9px;
  height: 127px;
  label { text-align: right; }
  > span:nth-child(3n) { font-size: 12px; }
`;

const RefInput = styled.span`
  display: flex;
  height: 22px;
  border: 1px solid #ababab;
  background: #fff;
  input { flex: 1; min-width: 0; padding-left: 4px; border: 0; }
  button {
    display: flex;
    align-items: center;
    justify-content: center;
    width: 20px;
    border: 2px solid #ccc;
    background: #fff;
  }
`;

const Faint = styled.span`
  color: #9a9a9a;
`;

const ArgHelp = styled.p`
  display: grid;
  grid-template-columns: 54px auto;
  gap: 7px;
  margin: 12px 0 0 138px;
  font-size: 12px;
  line-height: 15px;
`;

const Rule = styled.hr`
  margin: 27px 0 0;
  border: 0;
  border-top: 1px solid #dcdcdc;
`;

const HelpLink = styled.a`
  flex: 1;
  color: #0563c1;
  line-height: 24px;
`;

const SumResult = styled.div`
  margin: 6px 0 2px;
  padding-left: 305px;
`;

const FormulaResult = styled.div`
  margin: 12px 0 4px;
`;

const SumDialog = () => (
  <Dialog title="함수 인수" w={559} footer={<HelpLink href="#">도움말(H)</HelpLink>}>
    <Frame $pad="6px 7px 4px">
      <legend>SUM</legend>
      <SumGrid>
        <label htmlFor="number1">Number1</label>
        <RefInput><input id="number1" defaultValue="D9:D19" /><button aria-label="Number1 범위"><UpArrow /></button></RefInput>
        <span>=&nbsp;&nbsp; {'{"금'}&emsp;&emsp;{'액";0;0;0;0;0;0;0;0;0;0}'}</span>
        <label htmlFor="number2">Number2</label>
        <RefInput><input id="number2" /><button aria-label="Number2 범위"><UpArrow /></button></RefInput>
        <span>=&nbsp;&nbsp; <Faint>숫자</Faint></span>
      </SumGrid>
    </Frame>
    <SumResult>=&nbsp;&nbsp; 0</SumResult>
    <div>인수들의 합을 구합니다.</div>
    <ArgHelp>
      <span>Number1:</span>
      <span>number1,number2,... 은(는) 합계를 구하려는 값들로서 255개까지<br />지정할 수 있습니다. 논리값과 텍스트는 제외됩니다.</span>
    </ArgHelp>
    <Rule />
    <FormulaResult>수식 결과=&nbsp;&nbsp; 0</FormulaResult>
  </Dialog>
);

const MarginGrid = styled.div`
  display: grid;
  grid-template-columns: 51px 89px 51px;
  gap: 27px 30px;
  align-items: center;
  padding-left: 69px;
  > :nth-child(1) { grid-column: 2; justify-self: center; }
  > :nth-child(6) { grid-column: 2; justify-self: center; }
`;

const Paper = () => (
  <Svg w={89} h={121} stroke="#bbb">
    <rect x="1" y="1" width="86" height="118" fill="#fff" stroke="#000" />
    <path d="M87.5 2v118H2" stroke="#000" strokeWidth="2" />
    <path d="M11.5 2v117M77.5 2v117M2 15.5h85M2 106.5h85" />
    <path d="M13.5 30.5h61v60h-61zM29.5 30v60M44.5 30v60M59.5 30v60" />
    <path d="M13 34.5h61M13 38.5h61M13 42.5h61M13 46.5h61M13 50.5h61M13 54.5h61M13 58.5h61M13 62.5h61M13 66.5h61M13 70.5h61M13 74.5h61M13 78.5h61M13 82.5h61M13 86.5h61" />
  </Svg>
);

const MarginField = ({ name, k, value }) => (
  <FieldBlock><span>{name}<Key k={k} />:</span><Spin w={51} value={value} /></FieldBlock>
);

const PaneButtons = styled.div`
  display: flex;
  justify-content: flex-end;
  gap: 10px;
  margin-top: 32px;
`;

const PageDialog = () => (
  <Dialog title="페이지 설정" w={421}>
    <TabRow names={["페이지", "여백", "머리글/바닥글", "시트"]} active="여백" focus />
    <Pane $h={398}>
      <MarginGrid>
        <MarginField name="위쪽" k="T" value="1.9" />
        <MarginField name="머리글" k="A" value="0.8" />
        <MarginField name="왼쪽" k="L" value="1.8" />
        <Paper />
        <MarginField name="오른쪽" k="R" value="1.8" />
        <MarginField name="아래쪽" k="B" value="1.9" />
        <MarginField name="바닥글" k="F" value="0.8" />
      </MarginGrid>
      <SectionTitle $mt={4}>페이지 가운데 맞춤</SectionTitle>
      <Indent>
        <CheckLabel><Check defaultChecked /><span>가로<Key k="Z" /></span></CheckLabel>
        <CheckLabel><Check defaultChecked /><span>세로<Key k="V" /></span></CheckLabel>
      </Indent>
      <PaneButtons>
        <PushButton>인쇄<Key k="P" />...</PushButton>
        <PushButton $w={112}>인쇄 미리 보기<Key k="W" /></PushButton>
        <PushButton>옵션<Key k="O" />...</PushButton>
      </PaneButtons>
    </Pane>
  </Dialog>
);

/* ---------- CONTENT ---------- */

const DATE_NOTE =
  "날짜 서식으로 날짜와 시간에 해당하는 일련의 숫자를 날짜값으로 나타낼 수 있습니다. 별표(*)\n로 시작되는 날짜 서식은 운영 체제에 지정된 국가별 날짜 및 시간 설정에 따라 변경됩니다.\n별표가 없는 서식은 운영 체제 설정의 영향을 받지 않습니다.";

const std = (n, b = 79, d = 72) => [72, b, 72, d, ...Array(n - 4).fill(72)];

const STRIPS = [
  {
    top: 0,
    shots: [
      {
        box: [0, 0, 500, 665],
        view: (
          <>
            <FormulaBar cell="J17" />
            <Sheet cols={std(7, 78)} rows={plainRows(28)} cells={listCells} align="left" on={{ rows: [17] }} mute={["G", 28]} />
          </>
        ),
      },
      {
        box: [518, 0, 691, 682],
        view: (
          <>
            <FormulaBar cell="A9" value="내      역" top={4} />
            <Sheet
              cols={std(9, 78)}
              rows={plainRows(28)}
              cells={without({ ...listCells, A9: { t: naeyeok, rs: 11, align: "center" } }, "E6 D9 E9 C20")}
              align="left"
              rowHead={32}
              on={{ cols: "A", rows: span(9, 19) }}
            />
          </>
        ),
        picks: [[548, 239, 623, 483, "plain"]],
        dialog: [659, 121, <AlignDialog focus horizontal="일반" indent="0" dark off />],
        marks: [[539, 229, 632, 490], [1043, 175, 1107, 412], [669, 405, 774, 440], [995, 595, 1119, 687]],
      },
      {
        box: [1240, 4, 713, 728],
        view: (
          <>
            <HomeRibbon merged />
            <FormulaBar cell="A2" value="지출결의서" top={12} />
            <Sheet
              cols={std(10)}
              rows={plainRows(23)}
              cells={filledCells}
              on={{ cols: "ABCDEF", rows: [2, 6, 7, 8, 9, 20] }}
              mute={["J"]}
            />
          </>
        ),
        picks: [[1273, 257, 1713, 278, "thin"]],
        marks: [[1771, 95, 1950, 148], [1259, 233, 1746, 289], [1327, 329, 1744, 450], [1469, 621, 1760, 688]],
      },
      {
        box: [1994, 0, 733, 733],
        view: (
          <>
            <HomeRibbon merged number="일반" />
            <FormulaBar cell="A1" top={12} />
            <Sheet cols={std(10)} rows={plainRows(23)} cells={mergedCells} rowHead={34} all />
          </>
        ),
        marks: [[2417, 101, 2470, 142], [1984, 193, 2038, 237]],
      },
      {
        box: [2758, 4, 546, 562],
        view: (
          <>
            <FormulaBar cell="B9" value="적요" top={6} inset={5} />
            <Sheet
              cols={std(7, 79, 96)}
              rows={plainRows(23)}
              cells={{
                ...mergedCells,
                D9: { t: "금액", fill: GRAY, r: "m" },
                E9: { t: "비고", cs: 2, fill: GRAY },
              }}
              on={{ cols: "BCDEF", rows: [9] }}
            />
          </>
        ),
        picks: [[2863, 245, 3255, 269, "plain"]],
        marks: [[3239, 252, 3272, 281]],
        extra: (
          <Arrow $x={px(502)} $y={px(269)} width="46" height="180" viewBox="0 0 46 180" fill="none" stroke={RED} strokeWidth="5" strokeLinecap="round">
            <path d="M22 3v168M3 154l20 18 20-16" />
          </Arrow>
        ),
      },
      {
        box: [3360, 6, 861, 637],
        view: (
          <>
            <FormulaBar cell="B4" value="2020-01-01" top={8} inset={5} />
            <Sheet
              cols={std(11, 89, 96)}
              rows={plainRows(26)}
              cells={without({ ...mergedCells, B4: { t: "2020-01-01", size: 14 } }, "E6 E9")}
              on={{ cols: "B", rows: [4] }}
            />
          </>
        ),
        picks: [[3465, 138, 3555, 162, "plain"]],
        dialog: [
          3670,
          82,
          <FormatDialog kind="날짜" sample="2020-01-01" note={DATE_NOTE}>
            <FieldBlock as="div" $mt={5}>
              <span>형식<Key k="T" />:</span>
              <ListBox
                items={["*2012-03-14", "*2012년 3월 14일 수요일", "2012-03-14", "2012년 3월 14일", "12年 3月 14日", "2012년 3월", "3월 14일"]}
                active={0}
                h={105}
                thumb={18}
              />
            </FieldBlock>
            <FieldBlock $mt={5}><span>로캘(위치)<Key k="L" />:</span><Picker value="한국어" /></FieldBlock>
            <FieldBlock $mt={5}><span>달력 종류<Key k="A" />:</span><Picker value="양력" /></FieldBlock>
          </FormatDialog>,
        ],
        marks: [[3445, 121, 3576, 178], [3663, 225, 3794, 262], [3795, 163, 4209, 286]],
      },
    ],
  },
  {
    top: 733,
    shots: [
      {
        box: [16, 840, 1015, 771],
        view: (
          <>
            <FormulaBar value="=SUM(D9:D19)" top={9} inset={0} />
            <Sheet
              cols={formCols(9)}
              rows={formRows(4, 22)}
              cells={{
                ...formCells({ from: "C", won: "=SUM(D9:D19)", wonBold: false }),
                A21: { t: <>&emsp;&ensp;금액을 청구하오니 결재 바랍니다.</>, bold: true, cs: 6 },
              }}
              heads="cols"
              dx={-194}
              breaks="FN"
              from="C"
              on={{ cols: "EF" }}
              mute={["O"]}
            />
          </>
        ),
        picks: [[243, 1002, 430, 1044, "plain"], [103, 1083, 244, 1523, "ants"]],
        dialog: [444, 1005, <SumDialog />],
        marks: [[215, 989, 436, 1054], [81, 1069, 272, 1544]],
      },
      {
        box: [1104, 824, 787, 648],
        view: (
          <Sheet
            cols={formCols(9)}
            rows={formRows(4, 20)}
            cells={formCells({ from: "E", won: "₩0", wonBold: false })}
            heads={false}
            dx={-405}
            dy={-7}
            breaks="FN"
          />
        ),
        picks: [[1120, 912, 1307, 953, "plain"]],
        dialog: [
          1342,
          860,
          <FormatDialog kind="통화" focus sample="₩0" note={"통화 서식은 일반 통화 수치에 사용합니다. 회계 서식을 사용하면 소수점에 맞추어 열이\n정렬됩니다."}>
            <FieldLine $mt={6}><span>소수 자릿수<Key k="D" />:</span><Spin value="0" /></FieldLine>
            <FieldLine $mt={6}><span>기호<Key k="S" />:</span><Picker grow value="₩" /></FieldLine>
            <FieldBlock as="div" $mt={3}>
              <span>음수<Key k="N" />:</span>
              <ListBox items={["(₩1,234)", "(₩1,234)", "₩1,234", "-₩1,234", "-₩1,234"]} active={1} red={[0, 2, 4]} h={178} />
            </FieldBlock>
          </FormatDialog>,
        ],
        marks: [[1324, 967, 1481, 1014], [1471, 1074, 1884, 1126]],
      },
      {
        box: [1950, 820, 779, 617],
        view: (
          <Sheet
            cols={formCols(8)}
            rows={formRows(4, 20)}
            cells={formCells({ from: "E", won: "(₩ 0 )", wonBold: false })}
            heads={false}
            dx={-400}
            dy={-20}
            breaks="F"
          />
        ),
        picks: [[1970, 895, 2157, 936, "plain"]],
        dialog: [
          2175,
          860,
          <FormatDialog kind="사용자 지정" focus sample="(₩ 0 )" note="기존의 형식 중 하나를 선택한 후 변형시킵니다.">
            <CustomFormat value="(₩ #,##0 )" items={["h:mm:ss", ...CODES]} active={11} />
          </FormatDialog>,
        ],
        marks: [[1951, 873, 2166, 960], [2301, 943, 2590, 1056], [2177, 1101, 2326, 1148]],
      },
      {
        box: [2768, 844, 690, 331],
        view: (
          <>
            <FormulaBar cell="E7" value="=E7" top={11} inset={5} live />
            <Sheet
              cols={formCols(1)}
              rows={formRows(4, 11)}
              cells={without(
                {
                  ...formCells({ date: "2020-01-01", amount: { t: <>=<Ref>E7</Ref></>, align: "left" }, won: "" }),
                  E7: { t: "(₩ 0 )", bold: true, cs: 2, b: "k", fill: "#e9f0fa" },
                },
                "A9",
              )}
              breaks="F"
              on={{ cols: "BCD", rows: [7] }}
              mute={[11]}
            />
          </>
        ),
        picks: [[2886, 1010, 3224, 1051, "edit"], [3223, 1010, 3410, 1051, "ref"]],
        marks: [[2756, 985, 3468, 1072]],
      },
    ],
  },
  {
    top: 1611,
    shots: [
      {
        box: [36, 1668, 668, 785],
        view: (
          <>
            <FormulaBar cell="B7" value="=E7" top={8} inset={5} />
            <Sheet
              cols={formCols(1)}
              rows={formRows(4, 22)}
              cells={without(
                formCells({ date: "2020-01-01", amount: { t: "영", bold: true }, won: "(₩ 0 )" }),
                "B9 D9 E9 C20 A21",
              )}
              breaks="F"
              on={{ cols: "BCD", rows: [7] }}
              mute={["G"]}
            />
          </>
        ),
        picks: [[154, 1831, 492, 1872, "plain"]],
        dialog: [
          142,
          1883,
          <FormatDialog kind="기타" focus sample="영" note="기타 서식은 목록 및 데이터베이스 값을 찾을 때에 사용합니다.">
            <FieldBlock as="div" $mt={5}>
              <span>형식<Key k="T" />:</span>
              <ListBox
                items={["우편 번호", "전화 번호 (국번 4자리)", "전화 번호 (국번 3자리)", "주민등록번호", "숫자(한자)", "숫자(한자-갖은자)", "숫자(한글)"]}
                active={6}
                h={105}
              />
            </FieldBlock>
            <FieldBlock $mt={5}><span>로캘(위치)<Key k="L" />:</span><Picker value="한국어" /></FieldBlock>
          </FormatDialog>,
        ],
        marks: [[117, 1819, 502, 1880], [131, 2111, 268, 2154], [277, 2119, 668, 2166]],
      },
      {
        box: [804, 1656, 662, 851],
        view: (
          <>
            <FormulaBar cell="B7" value="=E7" top={5} inset={4} />
            <Sheet
              cols={formCols(1)}
              rows={formRows(4, 24)}
              cells={without(
                formCells({ date: "2020-01-01", amount: { t: "영", bold: true }, won: "(₩ 0 )" }),
                "B9 D9 E9 C20 A21",
              )}
              breaks="F"
              on={{ cols: "BCD", rows: [7] }}
              mute={["G"]}
            />
          </>
        ),
        tabs: true,
        picks: [[923, 1816, 1260, 1857, "plain"]],
        dialog: [
          918,
          1906,
          <FormatDialog kind="사용자 지정" sample="일금 영 원정" note="기존의 형식 중 하나를 선택한 후 변형시킵니다.">
            <CustomFormat value="일금 [DBNum4][$-ko-KR]G/표준 원정" items={[...CODES, "[DBNum4][$-ko-KR]G/표준"]} />
          </FormatDialog>,
        ],
        marks: [[1043, 2041, 1322, 2108], [912, 2145, 1042, 2202]],
      },
      {
        box: [1508, 1664, 826, 814],
        view: (
          <>
            <FormulaBar cell="B8" top={9} inset={3} />
            <Sheet
              cols={formCols(3)}
              rows={formRows(1, 20)}
              cells={without(
                formCells({ date: "2020-01-01", boldDate: true, amount: { t: "일금 영 원정", bold: true } }),
                "E6 D9 E9 A20 C20",
              )}
              rowHead={32}
              breaks="F"
              on={{ cols: "BCDEF", rows: [8] }}
              mute={[20]}
            />
          </>
        ),
        dialog: [1778, 1863, <AlignDialog horizontal="왼쪽 (들여쓰기)" indent="1" />],
        marks: [[1623, 1987, 1780, 2031], [1785, 1951, 2056, 2078]],
      },
      {
        box: [2380, 1616, 860, 980],
        view: (
          <>
            <HomeRibbon solidBorder number="회계" wide search />
            <FormulaBar cell="D10" top={11} inset={2} />
            <Sheet
              cols={formCols(4)}
              rows={formRows(4, 24)}
              cells={formCells({ date: "2020-01-01", boldDate: true, amount: { t: "일금 영 원정", bold: true }, won: "(₩ 0 )", fillD: true })}
              rowHead={31}
              breaks="F"
              on={{ cols: "D", rows: span(10, 19) }}
              mute={["J"]}
            />
          </>
        ),
        picks: [[2691, 2062, 2833, 2464, "plain"]],
        marks: [[2425, 1645, 2486, 1688], [3137, 1703, 3190, 1764], [2673, 2037, 2868, 2478]],
      },
      {
        box: [3276, 1620, 797, 1015],
        view: (
          <>
            <LayoutRibbon />
            <FormulaBar cell="E4" top={11} inset={2} />
            <Sheet
              cols={formCols(3)}
              rows={formRows(1, 20)}
              cells={without(formCells({ date: "2020-01-01", boldDate: true, amount: {} }), "E6 D9 E9")}
              rowHead={31}
              line="n"
              breaks="F"
              on={{ cols: "E", rows: [4] }}
              mute={["I", 20]}
            />
          </>
        ),
        tabs: true,
        dialog: [3465, 1966, <PageDialog />],
        marks: [[3419, 1637, 3554, 1686], [3667, 1745, 3720, 1798], [3457, 2295, 3584, 2398]],
      },
    ],
  },
];

const Shot = ({ shot, top, col }) => {
  const [x, y, , h] = shot.box;
  const place = ([x1, y1, x2, y2]) => ({
    $x: px(x1 - x),
    $y: px(y1 - y),
    $w: px(x2 - x1),
    $h: px(y2 - y1),
  });
  return (
    <ShotFrame $col={col} $drop={px(y - top)}>
      <Screen $h={px(h)}>{shot.view}</Screen>
      {shot.tabs && <BottomTabs><TabBar /></BottomTabs>}
      {shot.picks?.map((p, i) => <Selection key={i} $kind={p[4]} {...place(p)} />)}
      {shot.dialog && (
        <Float $x={px(shot.dialog[0] - x)} $y={px(shot.dialog[1] - y)}>{shot.dialog[2]}</Float>
      )}
      {shot.marks?.map((m, i) => <Mark key={i} {...place(m)} />)}
      {shot.extra}
    </ShotFrame>
  );
};

const Strip = ({ top, shots }) => {
  let edge = 0;
  const cols = shots.map(({ box: [x, , w] }) => {
    const gap = x - edge;
    edge = x + w;
    return `minmax(0, ${gap}fr) minmax(0, ${w}fr)`;
  });
  return (
    <StripGrid $cols={`${cols.join(" ")} minmax(0, ${BOARD - edge}fr)`}>
      {shots.map((s, i) => <Shot key={i} shot={s} top={top} col={i * 2 + 2} />)}
    </StripGrid>
  );
};

const App = () => (
  <>
    <GlobalStyle />
    <Page>
      {STRIPS.map((s) => <Strip key={s.top} {...s} />)}
    </Page>
  </>
);

export default App;
